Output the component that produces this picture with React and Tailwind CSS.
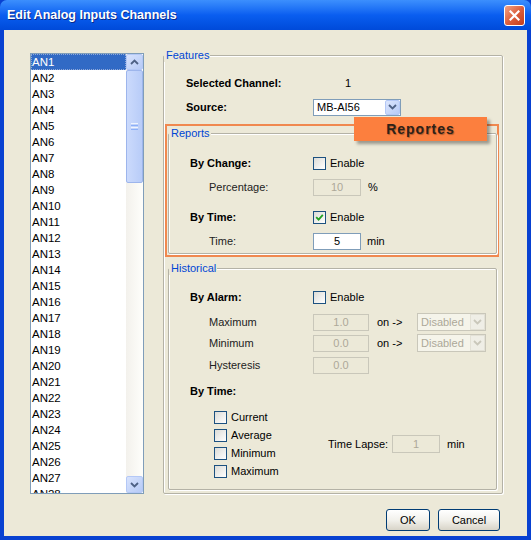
import React from 'react';

const channels = Array.from({ length: 28 }, (_, i) => `AN${i + 1}`);

function Check({ checked }) {
  return (
    <span className="w-[13px] h-[13px] border border-[#1C5180] bg-linear-to-br from-[#DCDCD7] to-white flex items-center justify-center shrink-0">
      {checked && (
        <svg width="9" height="9" viewBox="0 0 9 9">
          <path d="M1.2 4.2 L3.6 6.6 L7.8 1.8" stroke="#21A121" strokeWidth="1.8" fill="none" />
        </svg>
      )}
    </span>
  );
}

function Chevron({ color, down = true }) {
  return (
    <svg width="9" height="6" viewBox="0 0 9 6">
      <path d={down ? 'M1 1 L4.5 4.5 L8 1' : 'M1 5 L4.5 1.5 L8 5'} stroke={color} strokeWidth="1.8" fill="none" />
    </svg>
  );
}

function TextBox({ value, w, disabled, h = 'h-[17px]' }) {
  return (
    <span
      className={`${w} ${h} border flex items-center justify-center shrink-0 ${
        disabled ? 'border-[#C9C7BA] bg-[#ECE9D8] text-[#ACA899]' : 'border-[#7F9DB9] bg-white text-black'
      }`}
    >
      {value}
    </span>
  );
}

function Group({ title, className, children }) {
  return (
    <fieldset className={`border border-[#B4B2A6] rounded-[2px] px-0 shadow-[inset_1px_1px_0_#ffffff,1px_1px_0_#ffffff] ${className}`}>
      <legend className="pl-[2px] pr-[1px] leading-[13px] text-[#0046D5] bg-[#ECE9D8]">{title}</legend>
      {children}
    </fieldset>
  );
}

function XpButton({ label, w }) {
  return (
    <button className={`${w} h-[22px] border border-[#003C74] rounded-[3px] bg-linear-to-b from-white via-[#F2F1EC] to-[#D8D4C8] text-black text-[11px]`}>
      {label}
    </button>
  );
}

export default function App() {
  return (
    <div className="w-[531px] h-[540px] bg-[#0841D1] flex flex-col font-['Liberation_Sans',Arial,sans-serif] text-[11px] text-black select-none">
      {/* title bar */}
      <div className="h-[30px] bg-linear-to-b from-[#3C8FFD] via-[#0A5EF0] to-[#004AD9] rounded-t-[7px] flex items-center pl-[7px] pr-[6px]">
        <span className="text-white font-bold text-[12.5px] [text-shadow:1px_1px_0_#0A2A8A]">Edit Analog Inputs Channels</span>
        <div className="ml-auto w-[21px] h-[21px] rounded-[3px] border border-white bg-linear-to-br from-[#F0A285] via-[#DC5F3D] to-[#C33C19] flex items-center justify-center">
          <svg width="11" height="11" viewBox="0 0 11 11">
            <path d="M1.5 1.5 L9.5 9.5 M9.5 1.5 L1.5 9.5" stroke="white" strokeWidth="2.2" strokeLinecap="square" />
          </svg>
        </div>
      </div>

      {/* body */}
      <div className="flex-1 mx-[4px] mb-[4px] bg-[#ECE9D8] pt-[19px] pl-[26px] pr-[24px] pb-[5px] flex flex-col">
        <div className="flex items-start">
          {/* channel list */}
          <div className="mt-[4px] w-[114px] h-[441px] border border-[#7F9DB9] bg-white flex overflow-hidden">
            <div className="w-[95px] flex flex-col">
              {channels.map((c, i) => (
                <div
                  key={c}
                  className={`h-[16px] shrink-0 leading-[16px] pl-[1px] text-[11.5px] ${
                    i === 0 ? 'bg-[#316AC5] text-white outline-1 outline-dotted outline-[#8FA8D8] -outline-offset-1' : ''
                  }`}
                >
                  {c}
                </div>
              ))}
            </div>
            <div className="w-[17px] flex flex-col bg-linear-to-r from-[#F3F1EC] to-[#FEFEFB]">
              <div className="h-[16px] rounded-[2px] border border-[#B4C8F6] bg-linear-to-br from-[#D8E3FD] to-[#B6CAF6] flex items-center justify-center">
                <Chevron color="#4D6185" down={false} />
              </div>
              <div className="h-[113px] rounded-[2px] border border-[#9DB5EC] bg-linear-to-r from-[#CBDAFC] to-[#B8CCF8] flex flex-col items-center justify-center gap-[1px]">
                <span className="w-[7px] h-[1px] bg-[#EEF4FE]" />
                <span className="w-[7px] h-[1px] bg-[#8CB0F8]" />
                <span className="w-[7px] h-[1px] bg-[#EEF4FE]" />
                <span className="w-[7px] h-[1px] bg-[#8CB0F8]" />
              </div>
              <div className="flex-1" />
              <div className="h-[17px] rounded-[2px] border border-[#B4C8F6] bg-linear-to-br from-[#D8E3FD] to-[#B6CAF6] flex items-center justify-center">
                <Chevron color="#4D6185" />
              </div>
            </div>
          </div>

          {/* features */}
          <Group title="Features" className="ml-[19px] w-[340px] pb-[3px]">
            <div className="flex items-center h-[18px] mt-[12px] pl-[22px]">
              <span className="w-[127px] font-bold">Selected Channel:</span>
              <span className="ml-[32px]">1</span>
            </div>
            <div className="flex items-center h-[18px] mt-[6px] pl-[22px]">
              <span className="w-[127px] font-bold">Source:</span>
              <span className="w-[88px] h-[17px] border border-[#7F9DB9] bg-white flex items-center pl-[3px]">
                <span className="flex-1">MB-AI56</span>
                <span className="w-[15px] h-[15px] rounded-[2px] border border-[#B4C8F6] bg-linear-to-br from-[#DCE6FD] to-[#B6CAF6] flex items-center justify-center">
                  <Chevron color="#4D6185" />
                </span>
              </span>
            </div>

            {/* reports, highlighted */}
            <div className="relative mt-[8px] ml-[1px] w-[334px] border-2 border-[#F0884F] pb-[1px]">
              <Group title="Reports" className="mt-[1px] ml-[1px] w-[329px] pb-[3px]">
                <div className="flex items-center h-[18px] mt-[14px] pl-[21px]">
                  <span className="w-[123px] font-bold">By Change:</span>
                  <Check />
                  <span className="ml-[4px]">Enable</span>
                </div>
                <div className="flex items-center h-[18px] mt-[6px] pl-[40px] text-[#222222]">
                  <span className="w-[104px]">Percentage:</span>
                  <TextBox value="10" w="w-[48px]" disabled />
                  <span className="ml-[7px] text-black">%</span>
                </div>
                <div className="flex items-center h-[18px] mt-[12px] pl-[21px]">
                  <span className="w-[123px] font-bold">By Time:</span>
                  <Check checked />
                  <span className="ml-[4px]">Enable</span>
                </div>
                <div className="flex items-center h-[18px] mt-[6px] pl-[40px]">
                  <span className="w-[104px] text-[#222222]">Time:</span>
                  <TextBox value="5" w="w-[48px]" />
                  <span className="ml-[6px]">min</span>
                </div>
              </Group>
              <div className="absolute left-[187px] -top-[9px] w-[133px] h-[24px] bg-[#FC7F3E] shadow-[3px_3px_3px_rgba(0,0,0,0.35)] flex items-center justify-center">
                <span className="font-bold text-[14px] tracking-[1px] text-[#2E2218] [text-shadow:1px_1px_1px_rgba(0,0,0,0.3)]">Reportes</span>
              </div>
            </div>

            {/* historical */}
            <Group title="Historical" className="mt-[5px] ml-[4px] w-[329px] pb-[9px]">
              <div className="flex items-center h-[18px] mt-[13px] pl-[21px]">
                <span className="w-[123px] font-bold">By Alarm:</span>
                <Check />
                <span className="ml-[4px]">Enable</span>
              </div>
              {[
                ['Maximum', '1.0', true],
                ['Minimum', '0.0', true],
                ['Hysteresis', '0.0', false],
              ].map(([label, v, sel], i) => (
                <div key={label} className={`flex items-center h-[18px] pl-[40px] ${i === 0 ? 'mt-[7px]' : i === 1 ? 'mt-[3px]' : 'mt-[4px]'}`}>
                  <span className="w-[104px] text-[#222222]">{label}</span>
                  <TextBox value={v} w="w-[56px]" disabled />
                  {sel && (
                    <>
                      <span className="ml-[8px] w-[40px]">on -&gt;</span>
                      <span className="w-[69px] h-[18px] border border-[#C9C7BA] bg-[#F5F4EA] flex items-center pl-[3px] text-[#ACA899]">
                        <span className="flex-1">Disabled</span>
                        <span className="w-[15px] h-[16px] border border-[#E3E1D6] bg-[#EFEEE6] flex items-center justify-center">
                          <Chevron color="#C9C7BA" />
                        </span>
                      </span>
                    </>
                  )}
                </div>
              ))}
              <div className="flex items-center h-[18px] mt-[8px] pl-[21px]">
                <span className="font-bold">By Time:</span>
              </div>
              <div className="flex items-center mt-[8px] pl-[45px]">
                <div className="w-[114px] flex flex-col">
                  {['Current', 'Average', 'Minimum', 'Maximum'].map((l) => (
                    <div key={l} className="flex items-center h-[18px]">
                      <Check />
                      <span className="ml-[4px]">{l}</span>
                    </div>
                  ))}
                </div>
                <span className="w-[64px]">Time Lapse:</span>
                <TextBox value="1" w="w-[48px]" h="h-[18px]" disabled />
                <span className="ml-[7px]">min</span>
              </div>
            </Group>
          </Group>
        </div>

        <div className="flex justify-end gap-[8px] mt-[15px] mr-[3px]">
          <XpButton label="OK" w="w-[44px]" />
          <XpButton label="Cancel" w="w-[62px]" />
        </div>
      </div>
    </div>
  );
}
